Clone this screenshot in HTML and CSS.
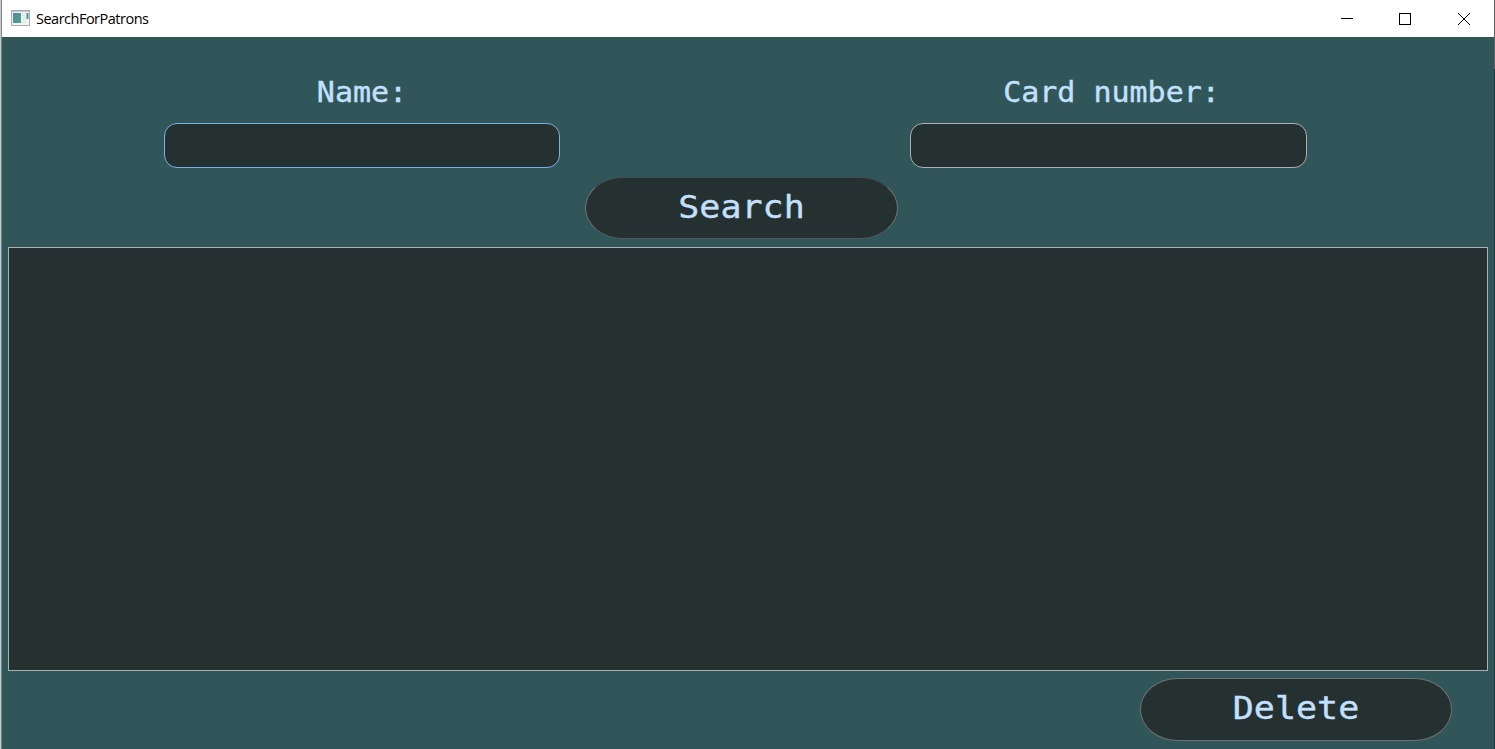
FILE: index.html
```html
<!DOCTYPE html>
<html lang="en">
<head>
<meta charset="utf-8">
<title>SearchForPatrons</title>
<link rel="stylesheet" href="styles.css">
</head>
<body>
<div class="window">
  <header class="titlebar">
    <svg class="app-icon" width="19" height="16" viewBox="0 0 19 16">
      <defs>
        <linearGradient id="pane" x1="0" y1="0" x2="1" y2="1">
          <stop offset="0" stop-color="#4c86a8"/>
          <stop offset="1" stop-color="#55a77c"/>
        </linearGradient>
      </defs>
      <rect x=".5" y=".5" width="18" height="15" fill="#f1f3f4" stroke="#a7adb3"/>
      <path d="M1 1.5h17" stroke="#c3c7cc"/>
      <rect x="2" y="3" width="8" height="10" fill="url(#pane)"/>
      <rect x="11" y="3" width="4" height="10" fill="#e2efeb"/>
      <rect x="15.500" y="3" width="2" height="6" fill="url(#pane)"/>
    </svg>
    <span class="title">SearchForPatrons</span>
    <div class="controls">
      <svg class="control" width="12" height="12"><path d="M0 5.500h12"/></svg>
      <svg class="control" width="12" height="12"><rect x=".5" y=".5" width="11" height="11"/></svg>
      <svg class="control smooth" width="12" height="12"><path d="M0 0L12 12M12 0L0 12"/></svg>
    </div>
  </header>
  <main class="content">
    <div class="fields">
      <label class="field"><span class="label">Name:</span><input class="input focused" type="text"></label>
      <label class="field card"><span class="label">Card number:</span><input class="input" type="text"></label>
    </div>
    <button class="button search"><span class="caption">Search</span></button>
    <div class="results"></div>
    <button class="button delete"><span class="caption">Delete</span></button>
  </main>
  <div class="edge"></div>
</div>
</body>
</html>
```
FILE: styles.css
```css
* { box-sizing: border-box; }
body { margin: 0; overflow: hidden; }
.window {
  position: relative;
  width: 1495px;
  height: 749px;
  border-left: 1px solid #c6c8c8;
  background: #305659;
}
.titlebar {
  display: flex;
  align-items: center;
  height: 37px;
  padding: 0 25px 0 9px;
  background: #fff;
  border-left: 1px solid #858b8c;
}
.app-icon { margin: 0 6px 1px 0; }
.title {
  font: 14.5px/20px "Open Sans", "Noto Sans", sans-serif;
  letter-spacing: -.5px;
  color: #000;
}
.controls { display: flex; gap: 46px; margin-left: auto; }
.control { fill: none; stroke: #000; stroke-width: 1; shape-rendering: crispEdges; }
.smooth { margin-left: 1px; shape-rendering: auto; }
.content {
  display: flex;
  flex-direction: column;
  height: 712px;
  padding: 35px 7px 0 6px;
  border-left: 1px solid #71898b;
}
.fields { display: flex; gap: 350px; padding-left: 156px; }
.field { display: flex; flex-direction: column; align-items: center; width: 396px; }
.card { width: 397px; }
.card .label { padding-left: 6px; }
.label, .caption {
  display: block;
  font-family: "DejaVu Sans Mono", monospace;
  color: #c4e0ff;
  white-space: pre;
  -webkit-text-stroke: .4px #c4e0ff;
  transform: scaleY(.93);
}
.label { height: 40px; padding-top: 1px; font-size: 30px; line-height: 40px; margin-bottom: 11px; }
.input {
  width: 100%;
  height: 45px;
  border: 1px solid #b0aeb2;
  border-radius: 13px;
  background: #253031;
  outline: none;
}
.focused { border-color: #78b1e6; }
.button {
  display: flex;
  align-items: center;
  justify-content: center;
  padding: 0 0 3px;
  width: 313px;
  height: 62px;
  border: 1px solid #707172;
  border-radius: 38px / 31px;
  background: #253031;
}
.search { margin: 9px 0 0 577px; border-top-color: #414d4e; border-bottom-color: #505a5b; }
.caption { font-size: 35px; line-height: 46px; }
.results { height: 424px; margin-top: 8px; background: #253031; border: 1px solid #adaeb0; }
.delete { margin: 7px 36px 0 auto; height: 63px; width: 312px; }
.edge {
  position: absolute;
  top: 0;
  right: 0;
  width: 1px;
  height: 749px;
  background: linear-gradient(#606364 69px, #203b40 69px);
}
```
